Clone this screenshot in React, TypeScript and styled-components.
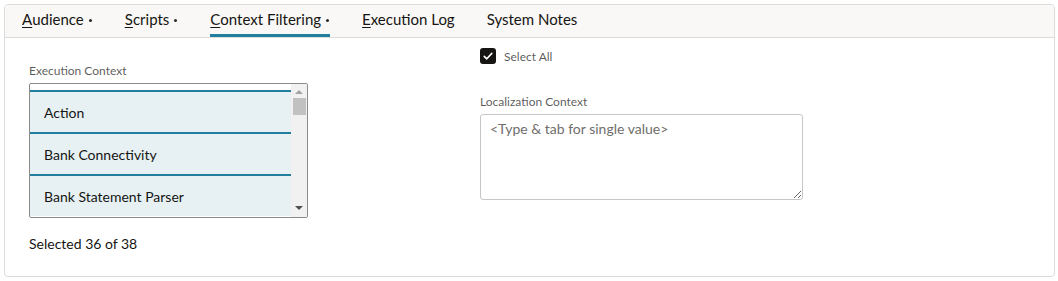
import React from 'react';
import styled, { createGlobalStyle } from 'styled-components';

const GlobalStyle = createGlobalStyle`
	html, body {
		margin: 0;
		padding: 0;
		background: #ffffff;
	}
	body {
		padding: 4px 3px 4px 4px;
		font-family: Lato, "Noto Sans", sans-serif;
		color: #161513;
	}
	* {
		box-sizing: border-box;
	}
`;

const Card = styled.div`
	border: 1px solid #dedcda;
	border-radius: 4px;
	height: 273px;
	overflow: hidden;
	background: #ffffff;
`;

const TabBar = styled.div`
	display: flex;
	gap: 32px;
	height: 33px;
	padding: 0 17px;
	background: #f9f8f6;
	border-bottom: 1px solid #dedcda;
`;

const Tab = styled.div<{ $active?: boolean }>`
	display: flex;
	align-items: center;
	height: 100%;
	padding-bottom: 1px;
	font-size: 15px;
	color: #161513;
	border-bottom: 3px solid ${(p) => (p.$active ? '#227e9e' : 'transparent')};
	u {
		text-decoration-thickness: 1px;
		text-underline-offset: 2px;
	}
`;

const Dot = styled.span`
	width: 3px;
	height: 3px;
	border-radius: 50%;
	margin: 3px 1px 0 5px;
	background: #2c2b29;
`;

const Body = styled.div`
	display: grid;
	grid-template-columns: 451px 323px;
	padding: 10px 24px;
`;

const Column = styled.div<{ $top?: number }>`
	display: flex;
	flex-direction: column;
	padding-top: ${(p) => p.$top ?? 0}px;
`;

const FieldLabel = styled.div`
	font-size: 12px;
	line-height: 16px;
	color: rgba(22, 21, 19, 0.72);
	margin-bottom: 4px;
`;

const ListBox = styled.div`
	display: flex;
	width: 279px;
	height: 135px;
	border: 1px solid #8d8b88;
	border-radius: 2px;
	overflow: hidden;
`;

const Options = styled.div`
	flex: 1;
	padding-top: 6px;
	overflow: hidden;
`;

const Option = styled.div`
	display: flex;
	align-items: center;
	height: 42px;
	padding-left: 14px;
	font-size: 14px;
	background: #e7f1f3;
	border-top: 2px solid #227e9e;
`;

const ScrollBar = styled.div`
	display: flex;
	flex-direction: column;
	align-items: center;
	width: 16px;
	background: #f1f1f1;
	padding-top: 6px;
`;

const Arrow = styled.div<{ $down?: boolean }>`
	width: 0;
	height: 0;
	border-left: 4px solid transparent;
	border-right: 4px solid transparent;
	${(p) =>
		p.$down
			? 'border-top: 4px solid #505050; margin-top: auto; margin-bottom: 7px;'
			: 'border-bottom: 4px solid #a3a3a3;'}
`;

const Thumb = styled.div`
	width: 13px;
	height: 17px;
	margin-top: 4px;
	background: #c1c1c1;
`;

const Summary = styled.div`
	margin-top: 16px;
	font-size: 14px;
	line-height: 20px;
`;

const CheckRow = styled.label`
	display: flex;
	align-items: center;
	gap: 8px;
	height: 16px;
	font-size: 12px;
	color: rgba(22, 21, 19, 0.72);
	margin-bottom: 30px;
`;

const CheckBox = styled.span`
	display: flex;
	align-items: center;
	justify-content: center;
	width: 16px;
	height: 16px;
	border-radius: 3px;
	background: #161513;
`;

const TextArea = styled.textarea`
	width: 323px;
	height: 86px;
	padding: 4px 9px;
	border: 1px solid #c8c6c3;
	border-radius: 3px;
	font-family: Lato, "Noto Sans", sans-serif;
	font-size: 14px;
	line-height: 20px;
	color: #161513;
	outline: none;
	&::placeholder {
		color: #6f6e6c;
	}
`;

const tabs = [
	{ key: 'A', rest: 'udience', dot: true },
	{ key: 'S', rest: 'cripts', dot: true },
	{ key: 'C', rest: 'ontext Filtering', dot: true, active: true },
	{ key: 'E', rest: 'xecution Log' },
	{ key: '', rest: 'System Notes' },
];

const contexts = ['Action', 'Bank Connectivity', 'Bank Statement Parser'];

const App = () => {
	return (
		<>
			<GlobalStyle />
			<Card>
				<TabBar>
					{tabs.map((t) => (
						<Tab key={t.rest} $active={t.active}>
							{t.key && <u>{t.key}</u>}
							{t.rest}
							{t.dot && <Dot />}
						</Tab>
					))}
				</TabBar>
				<Body>
					<Column $top={15}>
						<FieldLabel>Execution Context</FieldLabel>
						<ListBox>
							<Options>
								{contexts.map((c) => (
									<Option key={c}>{c}</Option>
								))}
							</Options>
							<ScrollBar>
								<Arrow />
								<Thumb />
								<Arrow $down />
							</ScrollBar>
						</ListBox>
						<Summary>Selected 36 of 38</Summary>
					</Column>
					<Column>
						<CheckRow>
							<CheckBox>
								<svg width="12" height="12" viewBox="0 0 12 12">
									<path d="M2.2 6.3 L4.8 8.8 L9.8 3.4" fill="none" stroke="#fff" strokeWidth="1.6" strokeLinecap="round" strokeLinejoin="round" />
								</svg>
							</CheckBox>
							Select All
						</CheckRow>
						<FieldLabel>Localization Context</FieldLabel>
						<TextArea placeholder="<Type & tab for single value>" />
					</Column>
				</Body>
			</Card>
		</>
	);
};

export default App;
